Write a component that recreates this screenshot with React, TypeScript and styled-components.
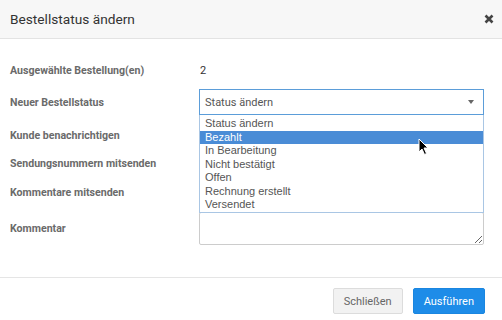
import { FC } from 'react'
import styled, { createGlobalStyle } from 'styled-components'

const GlobalStyle = createGlobalStyle`
	html, body {
		margin: 0;
		padding: 0;
		background: #fff;
	}
	body {
		font-family: Roboto, 'Liberation Sans', sans-serif;
	}
`

const Modal = styled.div`
	width: 502px;
	height: 320px;
	display: flex;
	flex-direction: column;
	background: #fff;
	overflow: hidden;
	position: relative;
`

const Header = styled.div`
	height: 38px;
	display: flex;
	align-items: center;
	justify-content: space-between;
	padding: 0 8px 0 10px;
	background: #f7f7f7;
	border-bottom: 1px solid #e3e3e3;
	flex-shrink: 0;
`

const Title = styled.h4`
	margin: 0;
	font-size: 13.7px;
	font-weight: 400;
	color: #333;
`

const Close = styled.button`
	border: 0;
	background: none;
	padding: 0;
	width: 10px;
	height: 10px;
	display: flex;
	cursor: pointer;
`

const Body = styled.div`
	flex: 1;
	padding: 20px 18px 0 10px;
	display: flex;
	flex-direction: column;
`

const Row = styled.div<{ $h: number; $mt: number }>`
	display: grid;
	grid-template-columns: 189px 1fr;
	align-items: center;
	height: ${(p) => p.$h}px;
	margin-top: ${(p) => p.$mt}px;
`

const Label = styled.label`
	font-size: 10.6px;
	font-weight: 700;
	color: #6a6a6a;
`

const Value = styled.span`
	font-size: 11px;
	color: #333;
	padding-left: 1px;
`

const SelectWrap = styled.div`
	position: relative;
	height: 100%;
`

const SelectBox = styled.div`
	height: 100%;
	box-sizing: border-box;
	border: 1px solid #5b9dd9;
	display: flex;
	align-items: center;
	justify-content: space-between;
	padding: 0 9px 0 5px;
	font-size: 11px;
	color: #555;
	background: #fff;
`

const Caret = styled.span`
	width: 0;
	height: 0;
	border-left: 3.5px solid transparent;
	border-right: 3.5px solid transparent;
	border-top: 4px solid #666;
`

const OptionList = styled.ul`
	position: absolute;
	top: 100%;
	left: 0;
	right: 0;
	margin: 0;
	padding: 2px 0 0;
	list-style: none;
	box-sizing: border-box;
	height: 98px;
	background: #fff;
	border: 1px solid #a9c6e4;
	border-top: 0;
	z-index: 5;
	font-family: 'Liberation Sans', Arial, sans-serif;
`

const Option = styled.li<{ $active?: boolean }>`
	height: 13.5px;
	line-height: 13.5px;
	padding-left: 5px;
	font-size: 11px;
	color: ${(p) => (p.$active ? '#fff' : '#555')};
	background: ${(p) => (p.$active ? '#4a8cd6' : 'transparent')};
`

const Textarea = styled.textarea`
	height: 100%;
	box-sizing: border-box;
	border: 1px solid #ccc;
	border-radius: 2px;
	resize: vertical;
	font-family: Roboto, sans-serif;
	font-size: 11px;
`

const Footer = styled.div`
	height: 42px;
	border-top: 1px solid #e5e5e5;
	display: flex;
	justify-content: flex-end;
	align-items: flex-start;
	gap: 10px;
	padding: 10px 17px 0 0;
	box-sizing: border-box;
	flex-shrink: 0;
	margin-bottom: 1px;
`

const Button = styled.button<{ $primary?: boolean }>`
	height: 26px;
	padding: 0 10px;
	border-radius: 2px;
	font-family: Roboto, sans-serif;
	font-size: 11px;
	cursor: pointer;
	border: 1px solid ${(p) => (p.$primary ? '#1a86e0' : '#dcdcdc')};
	background: ${(p) => (p.$primary ? '#1e8ce8' : '#f2f2f2')};
	color: ${(p) => (p.$primary ? '#fff' : '#666')};
`

const Pointer = styled.svg`
	position: absolute;
	left: 418px;
	top: 138px;
	z-index: 10;
`

const options = [
	'Status ändern',
	'Bezahlt',
	'In Bearbeitung',
	'Nicht bestätigt',
	'Offen',
	'Rechnung erstellt',
	'Versendet',
]

const App: FC = () => {
	return (
		<>
			<GlobalStyle />
			<Modal>
				<Header>
					<Title>Bestellstatus ändern</Title>
					<Close aria-label="Schließen">
						<svg width="10" height="10" viewBox="0 0 10 10">
							<path
								d="M1.5 1.5 L8.5 8.5 M8.5 1.5 L1.5 8.5"
								stroke="#444"
								strokeWidth="2.6"
							/>
						</svg>
					</Close>
				</Header>
				<Body>
					<Row $h={22} $mt={0}>
						<Label>Ausgewählte Bestellung(en)</Label>
						<Value>2</Value>
					</Row>
					<Row $h={26} $mt={8}>
						<Label>Neuer Bestellstatus</Label>
						<SelectWrap>
							<SelectBox>
								Status ändern
								<Caret />
							</SelectBox>
							<OptionList>
								{options.map((o) => (
									<Option key={o} $active={o === 'Bezahlt'}>
										{o}
									</Option>
								))}
							</OptionList>
						</SelectWrap>
					</Row>
					<Row $h={26} $mt={7}>
						<Label>Kunde benachrichtigen</Label>
					</Row>
					<Row $h={26} $mt={2}>
						<Label>Sendungsnummern mitsenden</Label>
					</Row>
					<Row $h={26} $mt={3}>
						<Label>Kommentare mitsenden</Label>
					</Row>
					<Row $h={33} $mt={7}>
						<Label>Kommentar</Label>
						<Textarea />
					</Row>
				</Body>
				<Footer>
					<Button>Schließen</Button>
					<Button $primary>Ausführen</Button>
				</Footer>
				<Pointer width="12" height="18" viewBox="0 0 12 18">
					<path
						d="M1 1 L1 14 L4 11 L6.5 16.5 L8.5 15.5 L6 10 L10 10 Z"
						fill="#000"
						stroke="#fff"
						strokeWidth="1"
						strokeLinejoin="round"
					/>
				</Pointer>
			</Modal>
		</>
	)
}

export default App
